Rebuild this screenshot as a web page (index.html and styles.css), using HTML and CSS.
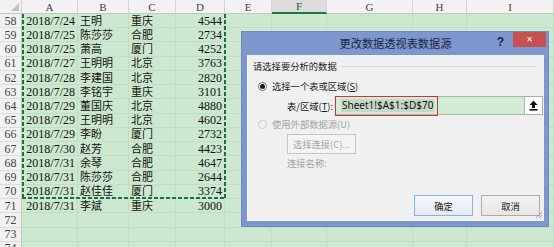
FILE: index.html
```html
<!DOCTYPE html>
<html>
<head>
  <meta charset="utf-8">
  <title>更改数据透视表数据源</title>
  <link rel="stylesheet" href="styles.css">
</head>
<body>
  <div class="sheet">
    <!-- Worksheet grid -->
    <table class="grid">
      <colgroup>
        <col class="c-rh"><col class="c-a"><col class="c-b"><col class="c-c"><col class="c-d">
        <col class="c-e"><col class="c-f"><col class="c-g"><col class="c-h"><col class="c-i">
      </colgroup>
      <thead>
        <tr>
          <th class="corner"></th><th>A</th><th>B</th><th>C</th><th>D</th>
          <th>E</th><th class="active">F</th><th>G</th><th>H</th><th>I</th>
        </tr>
      </thead>
      <tbody>
        <tr><th>58</th><td class="n">2018/7/24</td><td class="t">王明</td><td class="t">重庆</td><td class="n">4544</td><td></td><td></td><td></td><td></td><td></td></tr>
        <tr><th>59</th><td class="n">2018/7/25</td><td class="t">陈莎莎</td><td class="t">合肥</td><td class="n">2734</td><td></td><td></td><td></td><td></td><td></td></tr>
        <tr><th>60</th><td class="n">2018/7/25</td><td class="t">萧高</td><td class="t">厦门</td><td class="n">4252</td><td></td><td></td><td></td><td></td><td></td></tr>
        <tr><th>61</th><td class="n">2018/7/27</td><td class="t">王明明</td><td class="t">北京</td><td class="n">3763</td><td></td><td></td><td></td><td></td><td></td></tr>
        <tr><th>62</th><td class="n">2018/7/28</td><td class="t">李建国</td><td class="t">北京</td><td class="n">2820</td><td></td><td></td><td></td><td></td><td></td></tr>
        <tr><th>63</th><td class="n">2018/7/28</td><td class="t">李铭宇</td><td class="t">重庆</td><td class="n">3101</td><td></td><td></td><td></td><td></td><td></td></tr>
        <tr><th>64</th><td class="n">2018/7/29</td><td class="t">董国庆</td><td class="t">北京</td><td class="n">4880</td><td></td><td></td><td></td><td></td><td></td></tr>
        <tr><th>65</th><td class="n">2018/7/29</td><td class="t">王明明</td><td class="t">北京</td><td class="n">4602</td><td></td><td></td><td></td><td></td><td></td></tr>
        <tr><th>66</th><td class="n">2018/7/29</td><td class="t">李盼</td><td class="t">厦门</td><td class="n">2732</td><td></td><td></td><td></td><td></td><td></td></tr>
        <tr><th>67</th><td class="n">2018/7/30</td><td class="t">赵芳</td><td class="t">合肥</td><td class="n">4423</td><td></td><td></td><td></td><td></td><td></td></tr>
        <tr><th>68</th><td class="n">2018/7/31</td><td class="t">余琴</td><td class="t">合肥</td><td class="n">4647</td><td></td><td></td><td></td><td></td><td></td></tr>
        <tr><th>69</th><td class="n">2018/7/31</td><td class="t">陈莎莎</td><td class="t">合肥</td><td class="n">2644</td><td></td><td></td><td></td><td></td><td></td></tr>
        <tr><th>70</th><td class="n">2018/7/31</td><td class="t">赵佳佳</td><td class="t">厦门</td><td class="n">3374</td><td></td><td></td><td></td><td></td><td></td></tr>
        <tr><th>71</th><td class="n">2018/7/31</td><td class="t">李斌</td><td class="t">重庆</td><td class="n">3000</td><td></td><td></td><td></td><td></td><td></td></tr>
        <tr><th>72</th><td></td><td></td><td></td><td></td><td></td><td></td><td></td><td></td><td></td></tr>
        <tr><th>73</th><td></td><td></td><td></td><td></td><td></td><td></td><td></td><td></td><td></td></tr>
        <tr><th>74</th><td></td><td></td><td></td><td></td><td></td><td></td><td></td><td></td><td></td></tr>
      </tbody>
    </table>

    <!-- Copy selection (marching ants) around A1:D70 -->
    <div class="ants"></div>

    <!-- Dialog -->
    <div class="dialog">
      <div class="dlg-title">
        <span class="dlg-caption">更改数据透视表数据源</span>
        <span class="dlg-help">?</span>
        <span class="dlg-close">✕</span>
      </div>
      <div class="dlg-body">
        <div class="group-label"><span>请选择要分析的数据</span></div>

        <div class="radio-row">
          <span class="radio checked"></span>
          <span>选择一个表或区域(<u>S</u>)</span>
        </div>

        <div class="range-row">
          <span class="range-label">表/区域(<u>T</u>):</span>
          <div class="range-field">
            <span class="range-value">Sheet1!$A$1:$D$70</span>
            <span class="range-mark"></span>
          </div>
          <span class="collapse-btn">
            <svg width="9" height="11" viewBox="0 0 9 11">
              <path d="M4.5 0.5 L8.5 5 L6 5 L6 8 L3 8 L3 5 L0.5 5 Z" fill="#111"/>
              <rect x="0.5" y="9" width="8" height="1.6" fill="#111"/>
            </svg>
          </span>
        </div>

        <div class="radio-row disabled">
          <span class="radio"></span>
          <span>使用外部数据源(U)</span>
        </div>

        <div class="conn-btn">选择连接(C)...</div>
        <div class="conn-name">连接名称:</div>

        <div class="dlg-buttons">
          <button class="btn default">确定</button>
          <button class="btn">取消</button>
        </div>

        <svg class="grip" width="8" height="8" viewBox="0 0 8 8">
          <path d="M7 1 L1 7 M7 4 L4 7 M7 6.5 L6.5 7" stroke="#9a9a9a" stroke-width="1"/>
        </svg>
      </div>
    </div>
  </div>
</body>
</html>
```

FILE: styles.css
```css
body {
  margin: 0;
  background-color: #cce8cf;
}

.sheet {
  position: relative;
  width: 554px;
  height: 247px;
  overflow: hidden;
  background-color: #cce8cf;
}

/* Worksheet grid */
.grid {
  table-layout: fixed;
  width: 554px;
  border-collapse: separate;
  border-spacing: 0;
  font-family: "Liberation Serif", "Noto Sans CJK SC", serif;
  color: #111111;
}

.c-rh { width: 22px; }
.c-a { width: 56px; }
.c-b { width: 51px; }
.c-c { width: 47px; }
.c-d { width: 49px; }
.c-e { width: 47px; }
.c-f { width: 55px; }
.c-g { width: 86px; }
.c-h { width: 54px; }
.c-i { width: 87px; }

.grid thead tr { height: 14px; }
.grid tbody tr { height: 14.24px; }

.grid th,
.grid td {
  padding: 0 2px;
  line-height: 12px;
  border-right: 1px solid #c0dec4;
  border-bottom: 1px solid #c0dec4;
  white-space: nowrap;
  overflow: hidden;
}

.grid thead th {
  background-color: #f2f2f2;
  border-right: 1px solid #d5d5d5;
  border-bottom: 1px solid #c6c6c6;
  font-weight: normal;
  font-size: 11px;
  color: #444444;
  text-align: center;
}

.grid thead th.active {
  background-color: #dcdcdc;
  border-bottom: 2px solid #217346;
  color: #1e5e38;
}

.grid thead th.corner {
  position: relative;
}

.grid thead th.corner::after {
  content: "";
  position: absolute;
  right: 2px;
  bottom: 2px;
  border-left: 8px solid transparent;
  border-bottom: 8px solid #c2c2c2;
}

.grid tbody th {
  background-color: #f0f2f0;
  border-right: 1px solid #c6c6c6;
  border-bottom: 1px solid #dcdcdc;
  font-weight: normal;
  font-size: 12px;
  color: #444444;
  text-align: center;
  padding: 0;
}

.grid td.n {
  font-size: 12px;
  text-align: right;
}

.grid td.t {
  font-size: 11px;
}

/* Copy selection border */
.ants {
  position: absolute;
  left: 22px;
  top: 14px;
  width: 204px;
  height: 185px;
  pointer-events: none;
  background:
    repeating-linear-gradient(to bottom, #1f6e3d 0 4px, transparent 4px 6px) left top / 2px 100% no-repeat,
    repeating-linear-gradient(to bottom, #1f6e3d 0 4px, transparent 4px 6px) right top / 2px 100% no-repeat,
    repeating-linear-gradient(to right, #1f6e3d 0 4px, transparent 4px 6px) left bottom / 100% 2px no-repeat;
}

/* Dialog window */
.dialog {
  position: absolute;
  left: 241px;
  top: 31px;
  width: 308px;
  height: 196px;
  box-sizing: border-box;
  padding: 0 4px 5px 5px;
  background-color: #7d96cd;
  border: 1px solid #6f88c0;
  display: flex;
  flex-direction: column;
  font-family: "Noto Sans CJK SC", "Noto Sans", sans-serif;
}

.dlg-title {
  position: relative;
  height: 23px;
  flex: none;
}

.dlg-caption {
  display: block;
  text-align: center;
  line-height: 23px;
  font-size: 11.2px;
  color: #1c2740;
}

.dlg-help {
  position: absolute;
  right: 40px;
  top: 2px;
  font-family: "Liberation Sans", sans-serif;
  font-weight: bold;
  font-size: 12px;
  line-height: 16px;
  color: #1c2740;
}

.dlg-close {
  position: absolute;
  right: -2px;
  top: 0;
  width: 33px;
  height: 15px;
  background-color: #c75050;
  color: #ffffff;
  font-family: "DejaVu Sans", sans-serif;
  font-size: 8px;
  font-weight: bold;
  line-height: 15px;
  text-align: center;
}

.dlg-body {
  position: relative;
  flex: 1;
  background-color: #f0f0f0;
  border-left: 1px solid #fbfbfb;
  border-bottom: 1px solid #fbfbfb;
  padding: 4px 0 0 0;
  font-size: 9.3px;
  color: #1a1a1a;
}

.group-label {
  display: flex;
  align-items: center;
  padding-left: 5px;
  padding-right: 8px;
  line-height: 14px;
}

.group-label::after {
  content: "";
  flex: 1;
  margin-left: 4px;
  border-top: 1px solid #dcdcdc;
}

.radio-row {
  display: flex;
  align-items: center;
  gap: 5px;
  padding-left: 10px;
  margin-top: 6px;
  line-height: 14px;
}

.radio-row.disabled {
  margin-top: 2px;
  color: #a3a3a3;
}

.radio {
  width: 9px;
  height: 9px;
  box-sizing: border-box;
  border: 1px solid #6e6e6e;
  border-radius: 50%;
  background-color: #ffffff;
  display: flex;
  align-items: center;
  justify-content: center;
}

.radio.checked::after {
  content: "";
  width: 5px;
  height: 5px;
  border-radius: 50%;
  background-color: #1a1a1a;
}

.radio-row.disabled .radio {
  border-color: #c9c9c9;
  background-color: #f4f4f4;
}

.range-row {
  display: flex;
  align-items: center;
  margin-top: 3px;
  height: 19px;
}

.range-label {
  width: 50px;
  padding-left: 35px;
  text-align: right;
  flex: none;
}

.range-field {
  position: relative;
  width: 190px;
  height: 19px;
  margin-left: 2px;
  box-sizing: border-box;
  border: 1px solid #a9b7aa;
  background-color: #d3ecd6;
  display: flex;
  align-items: center;
  padding-left: 5px;
}

.range-value {
  font-family: "Noto Sans", sans-serif;
  font-size: 10px;
  line-height: 13px;
  background-color: #c6d9c8;
  color: #111111;
  padding: 0 1px;
}

.range-mark {
  position: absolute;
  left: -1px;
  top: -1px;
  width: 103px;
  height: 20px;
  box-sizing: border-box;
  border: 1.5px solid #d0343a;
}

.collapse-btn {
  width: 18px;
  height: 19px;
  box-sizing: border-box;
  border: 1px solid #adadad;
  border-left: none;
  background-color: #fdfdfd;
  display: flex;
  align-items: center;
  justify-content: center;
}

.conn-btn {
  margin: 3px 0 0 39px;
  width: 69px;
  height: 20px;
  box-sizing: border-box;
  border: 1px solid #c6c6c6;
  background-color: #f4f4f4;
  color: #a3a3a3;
  text-align: center;
  line-height: 18px;
}

.conn-name {
  margin: 2px 0 0 39px;
  line-height: 14px;
  color: #a3a3a3;
}

.dlg-buttons {
  display: flex;
  justify-content: flex-end;
  gap: 8px;
  margin-top: 25px;
  padding-right: 4px;
}

.btn {
  width: 59px;
  height: 21px;
  padding: 0;
  border: 1px solid #acacac;
  background: linear-gradient(#f2f2f2, #e6e6e6);
  font-family: "Noto Sans CJK SC", sans-serif;
  font-size: 9.3px;
  color: #1a1a1a;
}

.btn.default {
  border-color: #7eb4ea;
  background: linear-gradient(#f5f8fb, #e6ebf0);
}

.grip {
  position: absolute;
  right: 1px;
  bottom: 1px;
}
```
